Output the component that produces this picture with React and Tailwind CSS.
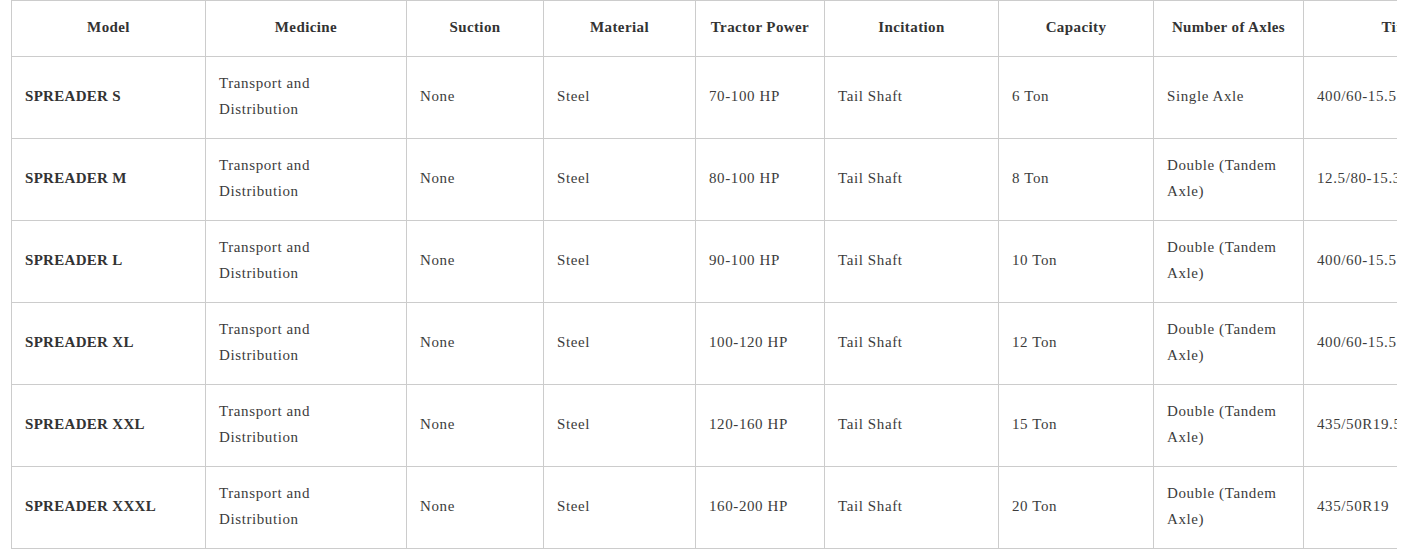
const columns = [
    { label: "Model", width: 194 },
    { label: "Medicine", width: 201 },
    { label: "Suction", width: 137 },
    { label: "Material", width: 152 },
    { label: "Tractor Power", width: 129 },
    { label: "Incitation", width: 174 },
    { label: "Capacity", width: 155 },
    { label: "Number of Axles", width: 150 },
    { label: "Tire Size", width: 216 },
];

const rows = [
    ["SPREADER S", "Transport and Distribution", "None", "Steel", "70-100 HP", "Tail Shaft", "6 Ton", "Single Axle", "400/60-15.5"],
    ["SPREADER M", "Transport and Distribution", "None", "Steel", "80-100 HP", "Tail Shaft", "8 Ton", "Double (Tandem Axle)", "12.5/80-15.3"],
    ["SPREADER L", "Transport and Distribution", "None", "Steel", "90-100 HP", "Tail Shaft", "10 Ton", "Double (Tandem Axle)", "400/60-15.5"],
    ["SPREADER XL", "Transport and Distribution", "None", "Steel", "100-120 HP", "Tail Shaft", "12 Ton", "Double (Tandem Axle)", "400/60-15.5"],
    ["SPREADER XXL", "Transport and Distribution", "None", "Steel", "120-160 HP", "Tail Shaft", "15 Ton", "Double (Tandem Axle)", "435/50R19.5"],
    ["SPREADER XXXL", "Transport and Distribution", "None", "Steel", "160-200 HP", "Tail Shaft", "20 Ton", "Double (Tandem Axle)", "435/50R19"],
];

export default function App() {
    return (
        <div className="bg-white min-h-[554px] pl-[11px] [font-family:'Liberation_Serif',serif]">
            <div className="w-[1386px] overflow-hidden">
                <table className="table-fixed border-collapse w-[1508px] text-[15px] [font-family:'Liberation_Serif',serif]">
                    <colgroup>
                        {columns.map((c, i) => (
                            <col key={i} style={{ width: c.width }} />
                        ))}
                    </colgroup>
                    <thead>
                        <tr className="h-[56px]">
                            {columns.map((c, i) => (
                                <th
                                    key={i}
                                    className="border border-[#cccccc] px-[13px] pb-[2px] text-center font-bold text-[#333333] tracking-[0.4px] whitespace-nowrap"
                                >
                                    {c.label}
                                </th>
                            ))}
                        </tr>
                    </thead>
                    <tbody>
                        {rows.map((r, i) => (
                            <tr key={i} className="h-[82px]">
                                {r.map((cell, j) => (
                                    <td
                                        key={j}
                                        className={
                                            "border border-[#cccccc] px-[13px] pb-[3px] align-middle leading-[26px] " +
                                            (j === 0
                                                ? "font-bold text-[#333333] tracking-[0.3px]"
                                                : "text-[#3c3c3c] tracking-[0.6px]")
                                        }
                                    >
                                        {cell}
                                    </td>
                                ))}
                            </tr>
                        ))}
                    </tbody>
                </table>
            </div>
        </div>
    );
}
